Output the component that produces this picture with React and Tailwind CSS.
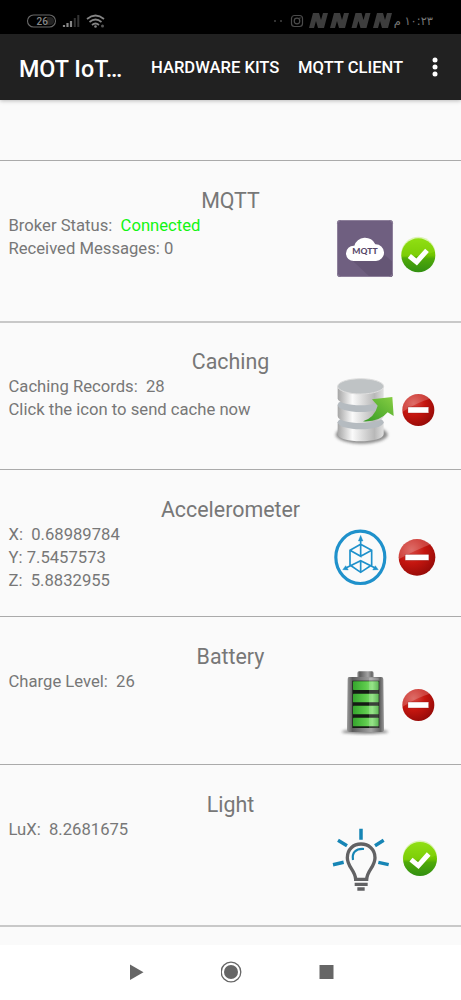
import React from "react";

function Check({ cx, cy, r }) {
  return (
    <g>
      <circle cx={cx} cy={cy} r={r} fill="url(#greenBall)" />
      <path d={`M${cx - r} ${cy + 4}A${r} ${r} 0 0 1 ${cx + r} ${cy - 12}Q${cx + 20} ${cy + 6} ${cx - r} ${cy + 4}Z`} fill="#9be61c" opacity=".3" />
      <path d={`M${cx - 27} ${cy + 2}l22 18 31-35`} fill="none" stroke="#fff" strokeWidth="15" />
    </g>
  );
}

function Minus({ cx, cy, r }) {
  const w = r * 1.3;
  return (
    <g>
      <circle cx={cx} cy={cy} r={r} fill="url(#redBall)" />
      <path d={`M${cx - r} ${cy + 6}A${r} ${r} 0 0 1 ${cx + r * 0.72} ${cy - r * 0.7}Q${cx - 4} ${cy - 22} ${cx - r} ${cy + 6}Z`} fill="#fff" opacity=".2" />
      <rect x={cx - w / 2} y={cy - 9} width={w} height="18" fill="#fff" stroke="#8d0b08" strokeWidth="1" />
    </g>
  );
}

function MqttIcon() {
  return (
    <g>
      <rect x="51" y="45" width="168" height="171" rx="10" fill="#6f5f80" />
      <path d="M190 146L219 172V206Q219 216 209 216H150L92 162Z" fill="#655675" />
      <rect x="52.500" y="46.500" width="165" height="168" rx="9" fill="none" stroke="#8e809b" strokeWidth="3" />
      <path d="M102 168A23 23 0 0 1 78 145A23 23 0 0 1 103 122A33 31 0 0 1 166 118A25 25 0 0 1 168 168Z" fill="#fff" />
      <text x="97" y="148" textLength="76" lengthAdjust="spacingAndGlyphs" fontFamily="Lato, sans-serif" fontWeight="900" fontSize="23" fill="#574869">MQTT</text>
    </g>
  );
}

function CacheIcon() {
  return (
    <g>
      <ellipse cx="125" cy="209" rx="78" ry="27" fill="#333" opacity=".55" filter="url(#soft)" />
      <path d="M53 171V207C53 236 191 236 191 207V171Z" fill="url(#silver)" />
      <ellipse cx="122" cy="172" rx="69" ry="21" fill="#b5bbc0" />
      <path d="M53 119V153C53 181 191 181 191 153V119Z" fill="url(#silver)" />
      <ellipse cx="122" cy="120" rx="69" ry="21" fill="#b5bbc0" />
      <path d="M53 65V100C53 128 191 128 191 100V65Z" fill="url(#silver)" />
      <ellipse cx="122" cy="64" rx="69" ry="23" fill="#bfc3c5" stroke="#dedede" strokeWidth="3" />
      <path d="M129 169Q164 157 173 122L156 103L217 96L221 153L203 142Q179 171 129 169Z" fill="url(#arrow)" />
    </g>
  );
}

function AccelerometerIcon() {
  return (
    <g fill="none" stroke="#1f91cb" strokeWidth="5">
      <ellipse cx="121" cy="127" rx="73.500" ry="78.500" strokeWidth="9.500" />
      <path d="M122 71V124L90 106M122 124L155 106M122 88L90 106V150L122 172L155 150V106L122 88M76 160L122 137L167 160M122 137V172" />
      <path d="M122 61L115 78H129ZM68 164L77 152L85 165ZM175 164L166 152L158 165Z" fill="#1f91cb" strokeWidth="1" />
    </g>
  );
}

function BatteryIcon() {
  return (
    <g>
      <ellipse cx="135" cy="215" rx="70" ry="6" fill="#555" opacity=".8" filter="url(#soft)" />
      <rect x="112" y="34" width="49" height="23" rx="5" fill="url(#metal)" />
      <path d="M87 51H184Q190 51 190 58L192 210Q192 216 183 216H88Q81 216 81 210L83 58Q83 51 87 51Z" fill="url(#metal)" />
      <rect x="97" y="62" width="81" height="142" fill="#151b14" />
      {[64, 101, 137, 173].map((y) => (
        <rect key={y} x="99" y={y} width="77" height="26" rx="2" fill="url(#cell)" />
      ))}
      <path d="M147 54H176V204H147Z" fill="#fff" opacity=".16" />
    </g>
  );
}

function BulbIcon() {
  return (
    <g fill="none" strokeLinecap="butt">
      <path d="M107 193C106 166 82 156 82 128C82 103 100 87 123 87S165 103 165 128C165 156 141 166 140 193Z" stroke="#626264" strokeWidth="10" />
      <path d="M99 135C95 113 107 100 132 102" stroke="#1685b5" strokeWidth="6.500" />
      <path d="M123 41V74M54 76L81 92M191 76L165 92M39 149L71 142M206 149L175 142" stroke="#1685b5" strokeWidth="10.500" />
      <path d="M104 208H143M112 222H134" stroke="#626264" strokeWidth="10" />
    </g>
  );
}

function Definitions() {
  return (
    <svg className="absolute h-0 w-0" aria-hidden="true">
      <defs>
        <linearGradient id="greenBall" x1="0" y1="0" x2="0" y2="1">
          <stop stopColor="#8cdd10" /><stop offset=".5" stopColor="#70c400" /><stop offset=".6" stopColor="#4fa909" /><stop offset="1" stopColor="#328f12" />
        </linearGradient>
        <radialGradient id="redBall" cx=".35" cy=".3" r=".8">
          <stop stopColor="#d64943" /><stop offset=".45" stopColor="#c5160f" /><stop offset="1" stopColor="#8f0907" />
        </radialGradient>
        <linearGradient id="silver">
          <stop stopColor="#a5a5a5" /><stop offset=".32" stopColor="#fafafa" /><stop offset=".55" stopColor="#dadada" /><stop offset=".8" stopColor="#b8b8b8" /><stop offset="1" stopColor="#e0e0e0" />
        </linearGradient>
        <linearGradient id="arrow" x1="0" y1="1" x2="1" y2="0">
          <stop stopColor="#359a24" /><stop offset="1" stopColor="#87ce43" />
        </linearGradient>
        <linearGradient id="metal">
          <stop stopColor="#9a9a9a" /><stop offset=".15" stopColor="#5c5c5c" /><stop offset=".65" stopColor="#a4a4a4" /><stop offset=".9" stopColor="#666" /><stop offset="1" stopColor="#999" />
        </linearGradient>
        <linearGradient id="cell">
          <stop stopColor="#35a52d" /><stop offset=".5" stopColor="#5dcb4c" /><stop offset=".75" stopColor="#83df72" /><stop offset="1" stopColor="#42aa38" />
        </linearGradient>
        <filter id="soft" x="-20%" y="-50%" width="140%" height="200%"><feGaussianBlur stdDeviation="4" /></filter>
      </defs>
    </svg>
  );
}

function Sensor({ title, rows, iconBox, badgeBox, icon, badge, className }) {
  return (
    <section className={`shrink-0 ${className}`}>
      <h2 className="h-[54px] pt-[27px] text-center text-[21.4px] leading-[25px]">{title}</h2>
      <div className="flex pl-[8.5px] pr-[21px]">
        <div className="flex-1 text-[16.65px] leading-[22.8px]">
          {rows.map((row, i) => <p key={i} className="whitespace-pre">{row}</p>)}
        </div>
        <svg className="h-[75px] w-[67px] shrink-0" viewBox={iconBox}>{icon}</svg>
        <svg className="h-[75px] w-[43px] shrink-0" viewBox={badgeBox}>{badge}</svg>
      </div>
    </section>
  );
}

function StatusBar() {
  return (
    <div className="flex h-[34px] items-center bg-black pl-[26px] pr-[28px] pt-[7px] text-[#777]">
      <svg className="h-[16px] w-[80px]" viewBox="0 0 80 16" fill="none">
        <rect x="1.500" y="2" width="28" height="12" rx="6" stroke="#686868" strokeWidth="1.100" />
        <path d="M21 4H24Q28 4 28 8T24 12H21Z" fill="#222" />
        <text x="10.500" y="12" fontFamily="Roboto, sans-serif" fontSize="10" fontWeight="500" fill="#898989">26</text>
        <path d="M38 14V12M41.500 14V10M45 14V8" stroke="#888" strokeWidth="2.200" />
        <path d="M48.800 14V5M52.300 14V2" stroke="#333" strokeWidth="2" />
        <path d="M61 6Q69.500-1 78 6M63.500 9Q69.500 4 75.500 9M66 12Q69.500 9 73 12" stroke="#858585" strokeWidth="1.700" />
        <circle cx="69.500" cy="13.500" r="1.300" fill="#858585" /><circle cx="76.500" cy="13" r="1.500" fill="#555" />
      </svg>
      <svg className="ml-auto h-[16px] w-[120px]" viewBox="0 0 120 16" fill="none">
        <circle cx="2" cy="8" r="1" fill="#444" /><circle cx="8" cy="8" r="1" fill="#444" />
        <rect x="18.500" y="2.500" width="11" height="11" rx="3" stroke="#4b4b4b" strokeWidth="1.200" />
        <circle cx="24" cy="8" r="2.800" stroke="#4b4b4b" strokeWidth="1.200" /><circle cx="27" cy="5" r=".7" fill="#4b4b4b" />
        {[36, 57, 78.5, 100].map((x) => (
          <path key={x} transform={`translate(${x} 0)`} d="M4 0H10L12 7L14 0H19L15 15H9L7 8L5 15H0Z" fill="#3d3d3d" />
        ))}
      </svg>
      <span dir="rtl" className="ml-[2px] w-[38px] whitespace-nowrap font-['DejaVu_Sans',sans-serif] text-[11.5px] leading-[16px] tracking-[-0.1px]">١٠:٢٣ م</span>
    </div>
  );
}

export default function App() {
  return (
    <main className="flex h-[1000px] w-[461px] flex-col overflow-hidden bg-[#fafafa] font-['Roboto',sans-serif] text-[#777]">
      <Definitions />
      <StatusBar />
      <header className="z-10 flex h-[66px] shrink-0 items-center bg-[#212121] pl-[19px] pr-[22px] pt-[3px] font-medium text-white shadow-[0_1px_4px_rgba(0,0,0,0.25)]">
        <h1 className="w-[132px] whitespace-nowrap pt-[1px] text-[23.3px]">MOT IoT…</h1>
        <span className="w-[147px] whitespace-nowrap text-[16.6px]">HARDWARE KITS</span>
        <span className="whitespace-nowrap text-[16.6px]">MQTT CLIENT</span>
        <svg className="mb-[3px] ml-auto h-[20px] w-[8px]" viewBox="0 0 8 20" fill="#fff"><circle cx="4" cy="3" r="2.500" /><circle cx="4" cy="10" r="2.500" /><circle cx="4" cy="17" r="2.500" /></svg>
      </header>
      <div className="h-[61px] shrink-0 border-b border-[#aaa]" />
      <Sensor className="h-[162px] border-b-2 border-[#c8c8c8]" title="MQTT" rows={[<>Broker Status:  <span className="text-[#12f512]">Connected</span></>, "Received Messages: 0"]} iconBox="30 30 201 225" badgeBox="231 30 129 225" icon={<MqttIcon />} badge={<Check cx={295} cy={151} r={51} />} />
      <Sensor className="-mt-px h-[148px] border-b border-[#aaa]" title="Caching" rows={["Caching Records:  28", "Click the icon to send cache now"]} iconBox="30 33 201 225" badgeBox="231 33 129 225" icon={<CacheIcon />} badge={<Minus cx={295} cy={135} r={48} />} />
      <Sensor className="h-[147px] border-b border-[#aaa]" title="Accelerometer" rows={["X:  0.68989784", "Y: 7.5457573", "Z:  5.8832955"]} iconBox="30 27 201 225" badgeBox="231 27 129 225" icon={<AccelerometerIcon />} badge={<Minus cx={291} cy={127} r={55} />} />
      <Sensor className="h-[148px] border-b border-[#aaa]" title="Battery" rows={["Charge Level:  26"]} iconBox="30 33 201 225" badgeBox="231 33 129 225" icon={<BatteryIcon />} badge={<Minus cx={295} cy={135} r={48} />} />
      <Sensor className="h-[162px] border-b-2 border-[#c8c8c8]" title="Light" rows={["LuX:  8.2681675"]} iconBox="30 12 201 225" badgeBox="231 12 129 225" icon={<BulbIcon />} badge={<Check cx={300} cy={132} r={51} />} />
      <nav className="mt-auto flex h-[55px] shrink-0 items-center justify-between bg-white pb-[1px] pl-[128px] pr-[126px]">
        <svg className="h-[22px] w-[18px]" viewBox="0 0 18 22"><path d="M2 3.500V19L15.500 11.300Z" fill="#666" /></svg>
        <svg className="h-[22px] w-[22px]" viewBox="0 0 22 22"><circle cx="10" cy="11" r="9.800" fill="none" stroke="#666" strokeWidth="1.300" /><circle cx="10" cy="11" r="7" fill="#666" /></svg>
        <svg className="h-[22px] w-[18px]" viewBox="0 0 18 22"><rect x="2.500" y="4" width="14" height="14" fill="#666" /></svg>
      </nav>
    </main>
  );
}
